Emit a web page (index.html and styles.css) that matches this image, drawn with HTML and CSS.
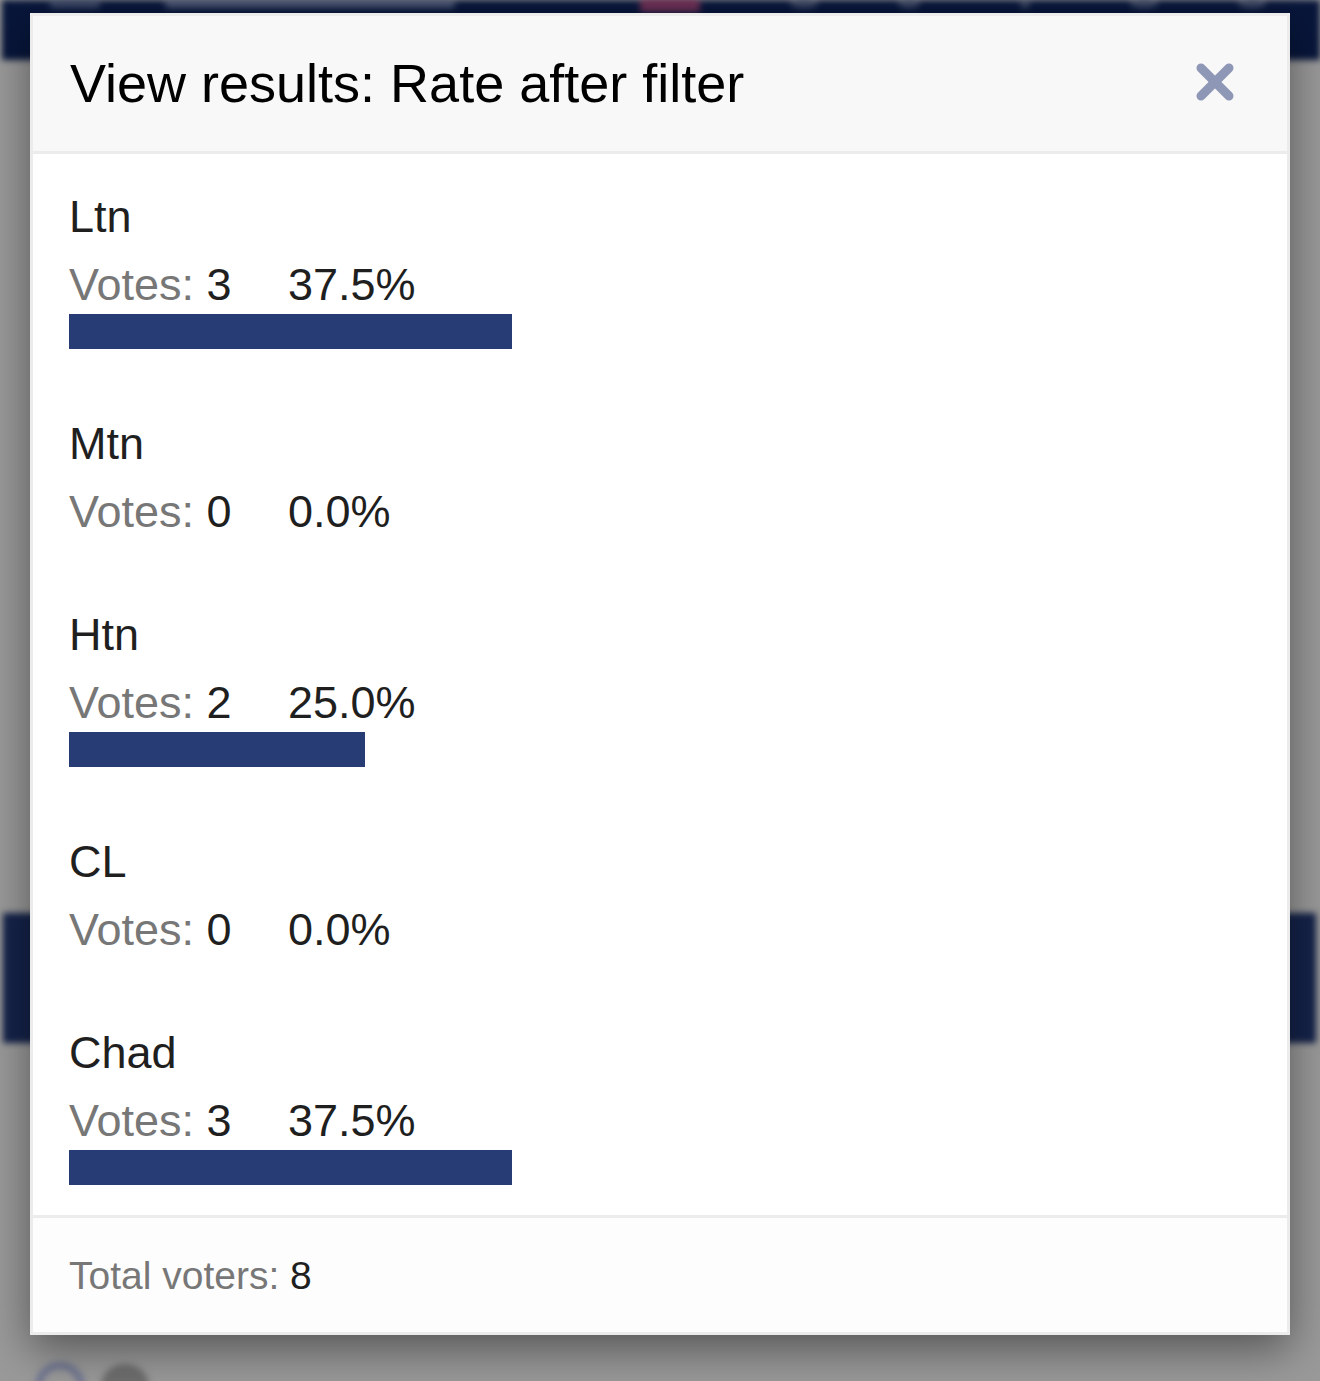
FILE: index.html
```html
<!DOCTYPE html>
<html lang="en">
<head>
<meta charset="utf-8">
<title>View results: Rate after filter</title>
<link rel="stylesheet" href="styles.css">
</head>
<body>
<div class="page">
  <div class="topbar">
    <span class="tb-menu"></span>
    <span class="tb-title"></span>
    <span class="tb-badge"></span>
    <span class="tb-icon i1"></span>
    <span class="tb-icon i2"></span>
    <span class="tb-icon i3"></span>
    <span class="tb-icon i4"></span>
    <span class="tb-icon i5"></span>
  </div>
  <div class="band"></div>
  <div class="bottom-icons">
    <span class="ring"></span>
    <span class="blob"></span>
  </div>
</div>

<div class="modal">
  <div class="modal-header">
    <h4 class="modal-title">View results: Rate after filter</h4>
    <svg class="close" width="38" height="38" viewBox="0 0 38 38" aria-label="Close">
      <line x1="5" y1="5" x2="33" y2="33"/>
      <line x1="33" y1="5" x2="5" y2="33"/>
    </svg>
  </div>
  <div class="modal-body">
    <div class="option">
      <div class="name">Ltn</div>
      <div class="votes"><span class="count"><span class="label">Votes:</span> 3</span><span class="pct">37.5%</span></div>
      <div class="bar" style="width:37.5%"></div>
    </div>
    <div class="option">
      <div class="name">Mtn</div>
      <div class="votes"><span class="count"><span class="label">Votes:</span> 0</span><span class="pct">0.0%</span></div>
    </div>
    <div class="option">
      <div class="name">Htn</div>
      <div class="votes"><span class="count"><span class="label">Votes:</span> 2</span><span class="pct">25.0%</span></div>
      <div class="bar" style="width:25%"></div>
    </div>
    <div class="option">
      <div class="name">CL</div>
      <div class="votes"><span class="count"><span class="label">Votes:</span> 0</span><span class="pct">0.0%</span></div>
    </div>
    <div class="option">
      <div class="name">Chad</div>
      <div class="votes"><span class="count"><span class="label">Votes:</span> 3</span><span class="pct">37.5%</span></div>
      <div class="bar" style="width:37.5%"></div>
    </div>
  </div>
  <div class="modal-footer">
    <span class="label">Total voters:</span> 8
  </div>
</div>
</body>
</html>
```
FILE: styles.css
```css
html, body {
  margin: 0;
  padding: 0;
}
body {
  width: 1320px;
  height: 1381px;
  overflow: hidden;
  background: #9a9a9a;
  font-family: "Liberation Sans", Arial, Helvetica, sans-serif;
  position: relative;
}

/* Blurred page behind the backdrop */
.page {
  filter: blur(3px);
  height: 1381px;
  display: flex;
  flex-direction: column;
}
.topbar {
  height: 60px;
  background: #08163b;
  display: flex;
  align-items: flex-start;
  margin: 0 0 0 2px;
}
.topbar span {
  display: block;
  margin-top: -2px;
  height: 10px;
}
.tb-menu { width: 50px; margin-left: 48px; background: #3c4866; border-radius: 3px; }
.tb-title { width: 290px; margin-left: 65px; background: #4a5572; border-radius: 4px; }
.tb-badge { width: 60px; height: 14px !important; margin-left: 185px; background: #6b2f55; border-radius: 3px; }
.tb-icon { width: 28px; background: #3f4a66; border-radius: 50%; }
.i1 { margin-left: 90px; }
.i2 { margin-left: 80px; width: 22px !important; }
.i3 { margin-left: 100px; width: 10px !important; }
.i4 { margin-left: 100px; }
.i5 { margin-left: 80px; }
.band {
  margin: 853px 4px 0 3px;
  height: 130px;
  background: #15234a;
}
.bottom-icons {
  margin-top: auto;
  display: flex;
  gap: 16px;
  padding: 0 0 0 35px;
  height: 19px;
}
.ring {
  width: 50px;
  height: 50px;
  border: 7px solid #6f7591;
  border-radius: 50%;
  box-sizing: border-box;
}
.blob {
  width: 48px;
  height: 44px;
  margin-top: 2px;
  background: #6e6e6e;
  border-radius: 50% 50% 0 0;
}

/* Modal */
.modal {
  position: absolute;
  left: 30px;
  top: 13px;
  width: 1260px;
  box-sizing: border-box;
  border: 3px solid #ececec;
  background: #ffffff;
  box-shadow: 0 14px 42px rgba(0, 0, 0, 0.45);
}
.modal-header {
  background: #f8f8f8;
  border-bottom: 3px solid #ececec;
  padding: 38px 53px 38px 37px;
  display: flex;
  align-items: center;
  justify-content: space-between;
}
.modal-title {
  margin: 0;
  font-size: 54px;
  line-height: 59px;
  font-weight: normal;
  color: #000000;
}
.close {
  display: block;
  margin-top: -3px;
}
.close line {
  stroke: #8e97b6;
  stroke-width: 9;
  stroke-linecap: round;
}

.modal-body {
  padding: 35px 36px 30px;
}
.option {
  margin-bottom: 67px;
}
.option:last-child {
  margin-bottom: 0;
}
.name, .votes {
  font-size: 45px;
  line-height: 56px;
  color: #1f1f1f;
}
.votes {
  margin-top: 12px;
  white-space: nowrap;
}
.count {
  display: inline-block;
  width: 219px;
}
.label {
  color: #777777;
}
.bar {
  margin-top: 1px;
  height: 35px;
  background: #273c74;
}

.modal-footer {
  border-top: 3px solid #ececec;
  padding: 30px 36px 28px;
  font-size: 39px;
  line-height: 56px;
  color: #1f1f1f;
  background: #fdfdfd;
}
```
